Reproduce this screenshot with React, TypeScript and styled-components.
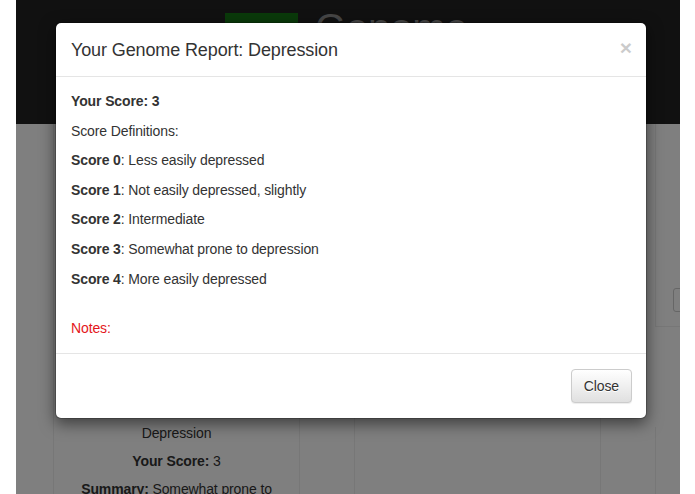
import styled, { createGlobalStyle } from 'styled-components';

const GlobalStyle = createGlobalStyle`
  html, body {
    margin: 0;
    padding: 0;
    background: #fff;
  }
  body {
    font-family: "Liberation Sans", Arial, sans-serif;
    font-size: 14px;
    line-height: 20px;
    letter-spacing: -0.12px;
    color: #333;
  }
  * {
    box-sizing: border-box;
  }
`;

const Frame = styled.div`
  position: relative;
  margin: 0 15px 0 16px;
  height: 494px;
  overflow: hidden;
  background: #fff;
`;

const Navbar = styled.header`
  display: flex;
  align-items: flex-start;
  gap: 17px;
  height: 124px;
  padding: 13px 0 0 209px;
  background: #222;
`;

const LogoMark = styled.div`
  width: 73px;
  height: 40px;
  background: #157415;
`;

const LogoText = styled.span`
  margin-top: -5px;
  font-size: 40px;
  line-height: 40px;
  color: #8c8c8c;
`;

const Cards = styled.main`
  display: grid;
  grid-template-columns: repeat(3, 247px);
  column-gap: 54px;
  align-items: start;
  padding: 0 0 0 37px;
`;

const Card = styled.section<{ $height?: number }>`
  border: 1px solid #eee;
  border-top: 0;
  padding: 15px;
  text-align: center;
  height: ${(p) => (p.$height ? `${p.$height}px` : 'auto')};
`;

const Stack = styled.div`
  display: flex;
  flex-direction: column;
  gap: 100px;
`;

const Thumb = styled.div`
  height: 274px;
  margin-bottom: 10px;
  background: #f5f5f5;
`;

const CardLine = styled.p`
  margin: 0 0 8px;
`;

const SmallButton = styled.button`
  display: block;
  margin: 149px 0 0 2px;
  height: 24px;
  padding: 0 10px;
  font: inherit;
  font-size: 12px;
  color: #333;
  background: #fff;
  border: 1px solid #ccc;
  border-radius: 3px;
`;

const Backdrop = styled.div`
  position: absolute;
  inset: 0;
  padding: 22px 0 0 39px;
  background: rgba(0, 0, 0, 0.5);
`;

const Modal = styled.div`
  width: 592px;
  background: #fff;
  background-clip: padding-box;
  border: 1px solid rgba(0, 0, 0, 0.2);
  border-radius: 6px;
  box-shadow: 0 5px 15px rgba(0, 0, 0, 0.5);
`;

const ModalHeader = styled.div`
  display: flex;
  justify-content: space-between;
  align-items: flex-start;
  padding: 16px 14px 15px 15px;
  border-bottom: 1px solid #e5e5e5;
`;

const ModalTitle = styled.h4`
  margin: 0;
  font-size: 18px;
  font-weight: 400;
  line-height: 22px;
  color: #333;
`;

const CloseX = styled.button`
  margin-top: -2px;
  padding: 0;
  border: 0;
  background: transparent;
  font-family: "Liberation Sans", Arial, sans-serif;
  font-size: 21px;
  font-weight: 700;
  line-height: 1;
  color: #000;
  opacity: 0.2;
  text-shadow: 0 1px 0 #fff;
`;

const ModalBody = styled.div`
  padding: 14px 15px 15px;
`;

const Line = styled.p`
  margin: 0 0 9.6px;
`;

const Notes = styled.p`
  margin: 29.4px 0 0;
  color: #e4161b;
`;

const ModalFooter = styled.div`
  display: flex;
  justify-content: flex-end;
  padding: 15px 14px 15px 15px;
  border-top: 1px solid #e5e5e5;
`;

const Button = styled.button`
  height: 34px;
  padding: 6px 12px;
  font-family: "Liberation Sans", Arial, sans-serif;
  font-size: 14px;
  line-height: 20px;
  letter-spacing: -0.12px;
  color: #333;
  text-shadow: 0 1px 0 #fff;
  background-image: linear-gradient(to bottom, #fff 0, #e0e0e0 100%);
  border: 1px solid #ccc;
  border-radius: 4px;
  box-shadow: inset 0 1px 0 rgba(255, 255, 255, 0.15), 0 1px 1px rgba(0, 0, 0, 0.075);
`;

const definitions = [
  { score: 0, text: 'Less easily depressed' },
  { score: 1, text: 'Not easily depressed, slightly' },
  { score: 2, text: 'Intermediate' },
  { score: 3, text: 'Somewhat prone to depression' },
  { score: 4, text: 'More easily depressed' },
];

const App = () => {
  return (
    <>
      <GlobalStyle />
      <Frame>
        <Navbar>
          <LogoMark />
          <LogoText>Genome</LogoText>
        </Navbar>
        <Cards>
          <Card>
            <Thumb />
            <CardLine>Depression</CardLine>
            <CardLine>
              <b>Your Score:</b> 3
            </CardLine>
            <CardLine>
              <b>Summary:</b> Somewhat prone to depression
            </CardLine>
          </Card>
          <Card $height={420} />
          <Stack>
            <Card $height={203}>
              <SmallButton>View</SmallButton>
            </Card>
            <Card $height={200} />
          </Stack>
        </Cards>

        <Backdrop>
          <Modal>
            <ModalHeader>
              <ModalTitle>Your Genome Report: Depression</ModalTitle>
              <CloseX aria-label="Close">×</CloseX>
            </ModalHeader>
            <ModalBody>
              <Line>
                <b>Your Score: 3</b>
              </Line>
              <Line>Score Definitions:</Line>
              {definitions.map((d) => (
                <Line key={d.score}>
                  <b>Score {d.score}</b>: {d.text}
                </Line>
              ))}
              <Notes>Notes:</Notes>
            </ModalBody>
            <ModalFooter>
              <Button>Close</Button>
            </ModalFooter>
          </Modal>
        </Backdrop>
      </Frame>
    </>
  );
};

export default App;
